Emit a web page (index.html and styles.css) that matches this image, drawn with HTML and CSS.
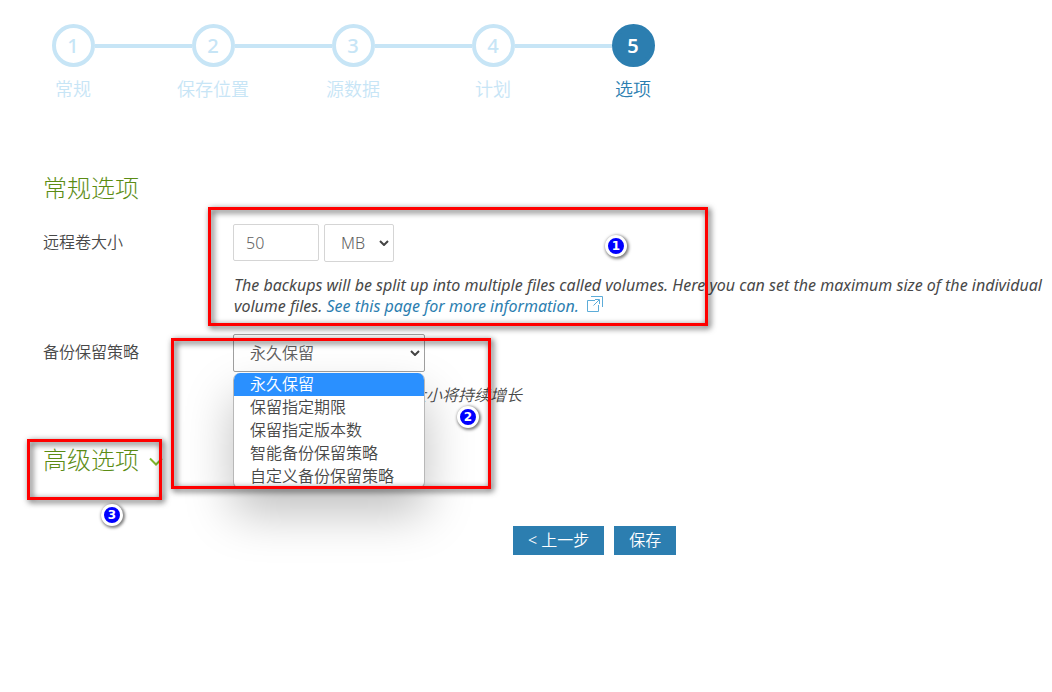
FILE: index.html
```html
<!DOCTYPE html>
<html lang="zh-CN">
<head>
<meta charset="utf-8">
<title>选项</title>
<link rel="stylesheet" href="styles.css">
</head>
<body>
<main class="page">
  <ol class="steps">
    <li class="step"><div class="track"><span class="line none"></span><span class="dot">1</span><span class="line"></span></div><span class="name">常规</span></li>
    <li class="step"><div class="track"><span class="line"></span><span class="dot">2</span><span class="line"></span></div><span class="name">保存位置</span></li>
    <li class="step"><div class="track"><span class="line"></span><span class="dot">3</span><span class="line"></span></div><span class="name">源数据</span></li>
    <li class="step"><div class="track"><span class="line"></span><span class="dot">4</span><span class="line"></span></div><span class="name">计划</span></li>
    <li class="step active" aria-current="step"><div class="track"><span class="line"></span><span class="dot">5</span><span class="line none"></span></div><span class="name">选项</span></li>
  </ol>

  <form class="options">
    <h2 class="title">常规选项</h2>
    <div class="row volume">
      <label class="label" for="size">远程卷大小</label>
      <div class="field">
        <div class="inputs">
          <input class="control size" id="size" type="text" value="50">
          <span class="picker unit">
            <select class="control" aria-label="单位"><option>MB</option></select>
            <svg class="arrow" viewBox="0 0 10 6" aria-hidden="true"><path d="M1 1l4 4 4-4"/></svg>
          </span>
        </div>
        <p class="hint english">The backups will be split up into multiple files called volumes. Here you can set the maximum size of the individual<br>volume files. <a class="link" href="#info">See this page for more information. <svg class="external" viewBox="0 0 16 16" aria-hidden="true"><path d="M8 4.500H.5v11h11V9M4 .5h11.500V11M6.500 9.500L12 4M8 3.500h4.500V8"/></svg></a></p>
      </div>
    </div>
    <div class="row">
      <label class="label" for="retention">备份保留策略</label>
      <div class="field">
        <span class="picker retention">
          <select class="control" id="retention"><option>永久保留</option></select>
          <svg class="arrow" viewBox="0 0 10 6" aria-hidden="true"><path d="M1 1l4 4 4-4"/></svg>
          <ul class="menu" role="listbox" aria-label="备份保留策略">
            <li class="choice selected" role="option" aria-selected="true">永久保留</li>
            <li class="choice" role="option">保留指定期限</li>
            <li class="choice" role="option">保留指定版本数</li>
            <li class="choice" role="option">智能备份保留策略</li>
            <li class="choice" role="option">自定义备份保留策略</li>
          </ul>
        </span>
        <p class="hint beside-menu">大小将持续增长</p>
      </div>
    </div>
    <h2 class="title advanced">高级选项 <svg class="chevron" viewBox="0 0 14 9" aria-hidden="true"><path d="M1 1.500l6 6 6-6"/></svg></h2>
    <div class="buttons">
      <button class="button" type="button">&lt; 上一步</button>
      <button class="button" type="button">保存</button>
    </div>
  </form>

  <div class="frame frame-1"></div>
  <div class="frame frame-2"></div>
  <div class="frame frame-3"></div>
  <span class="badge badge-1">1</span>
  <span class="badge badge-2">2</span>
  <span class="badge badge-3">3</span>
</main>
</body>
</html>
```
FILE: styles.css
```css
* { box-sizing: border-box; }
body {
  margin: 0;
  background: #fff;
  color: #484848;
  font: 350 16px/21px "Noto Sans", "Noto Sans CJK SC", sans-serif;
}
.page { position: relative; padding: 24px 0 60px; overflow-x: hidden; }

.steps { display: flex; margin: 0; padding: 0 0 0 3px; list-style: none; color: #c7e5f6; }
.step { width: 140px; text-align: center; font-size: 18px; line-height: 24px; }
.track { display: flex; align-items: center; margin-bottom: 10px; }
.line { flex: 1; height: 4px; background: #c7e5f6; }
.none { background: none; }
.dot {
  width: 43px;
  height: 43px;
  border: 4px solid #c7e5f6;
  border-radius: 50%;
  font-size: 20px;
  font-weight: 500;
  line-height: 35px;
}
.active { color: #2c7eb0; }
.active .dot { background: #2c7eb0; border-color: #2c7eb0; color: #fff; font-weight: 600; }

.options { padding: 71px 0 0 43px; }
.title { margin: 0; color: #5b8c14; font-size: 24px; font-weight: 300; line-height: 32px; }
.row { display: flex; margin-top: 20px; }
.row + .row { margin-top: 18px; }
.label { width: 190px; flex: none; padding-top: 8px; }
.field { flex: 1; min-width: 0; }
.inputs { display: flex; gap: 5px; }
.control {
  display: block;
  width: 100%;
  height: 38px;
  margin: 0;
  padding: 0 0 0 16px;
  border: 1px solid #d5d5d5;
  border-radius: 2px;
  background: #fff;
  color: #606060;
  font: inherit;
  appearance: none;
}
.size { width: 86px; height: 37px; padding-left: 12px; }
.picker { display: block; position: relative; }
.unit { width: 70px; }
.retention { width: 192px; }
.retention .control { border-color: #a0a0a0; }
.arrow {
  position: absolute;
  top: 16px;
  right: 5px;
  width: 10px;
  height: 6px;
  fill: none;
  stroke: #444;
  stroke-width: 2;
  pointer-events: none;
}
.hint { margin: 13px 0 0 1px; font-style: italic; }
.english { font-weight: 400; white-space: nowrap; }
.row.volume + .row { margin-top: 17px; }
.beside-menu { padding-left: 176px; }
.link { color: #2c7eb0; text-decoration: none; }
.external { width: 16px; height: 16px; margin-left: 4px; fill: none; stroke: #5dacd8; vertical-align: 0; }
.menu {
  position: absolute;
  top: 39px;
  left: 0;
  z-index: 1;
  width: 100%;
  margin: 0;
  padding: 0;
  overflow: hidden;
  list-style: none;
  background: #fff;
  border: 1px solid #b8b8b8;
  border-top: 0;
  border-radius: 7px;
  box-shadow: 0 24px 48px rgba(0, 0, 0, .25);
}
.choice { padding-left: 16px; line-height: 23px; }
.selected { background: #2a90ff; color: #fff; }
.advanced { margin-top: 38px; }
.chevron { width: 14px; height: 9px; margin-left: 4px; fill: none; stroke: #7fb52b; stroke-width: 2; vertical-align: 3px; }
.buttons { display: flex; gap: 10px; padding: 50px 0 0 470px; }
.button {
  padding: 4px 15px;
  border: 0;
  background: #2c7eb0;
  color: #fff;
  font: inherit;
}

/* Callout frames and numbered markers over the form */
.frame {
  position: absolute;
  z-index: 2;
  border: 3px solid #f00;
  filter: drop-shadow(2px 2px 3px rgba(0, 0, 0, .8));
  pointer-events: none;
}
.frame-1 { top: 207px; left: 208px; width: 500px; height: 119px; }
.frame-2 { top: 338px; left: 171px; width: 320px; height: 151px; }
.frame-3 { top: 439px; left: 27px; width: 135px; height: 61px; }
.badge {
  position: absolute;
  z-index: 3;
  width: 22px;
  height: 22px;
  border: 3px solid #fff;
  border-radius: 50%;
  background: #00f;
  box-shadow: 1px 1px 3px 1px rgba(0, 0, 0, .5);
  color: #fff;
  font: 700 12px/16px "DejaVu Sans", sans-serif;
  text-align: center;
}
.badge-1 { top: 235px; left: 605px; }
.badge-2 { top: 406px; left: 457px; }
.badge-3 { top: 504px; left: 101px; }
```
